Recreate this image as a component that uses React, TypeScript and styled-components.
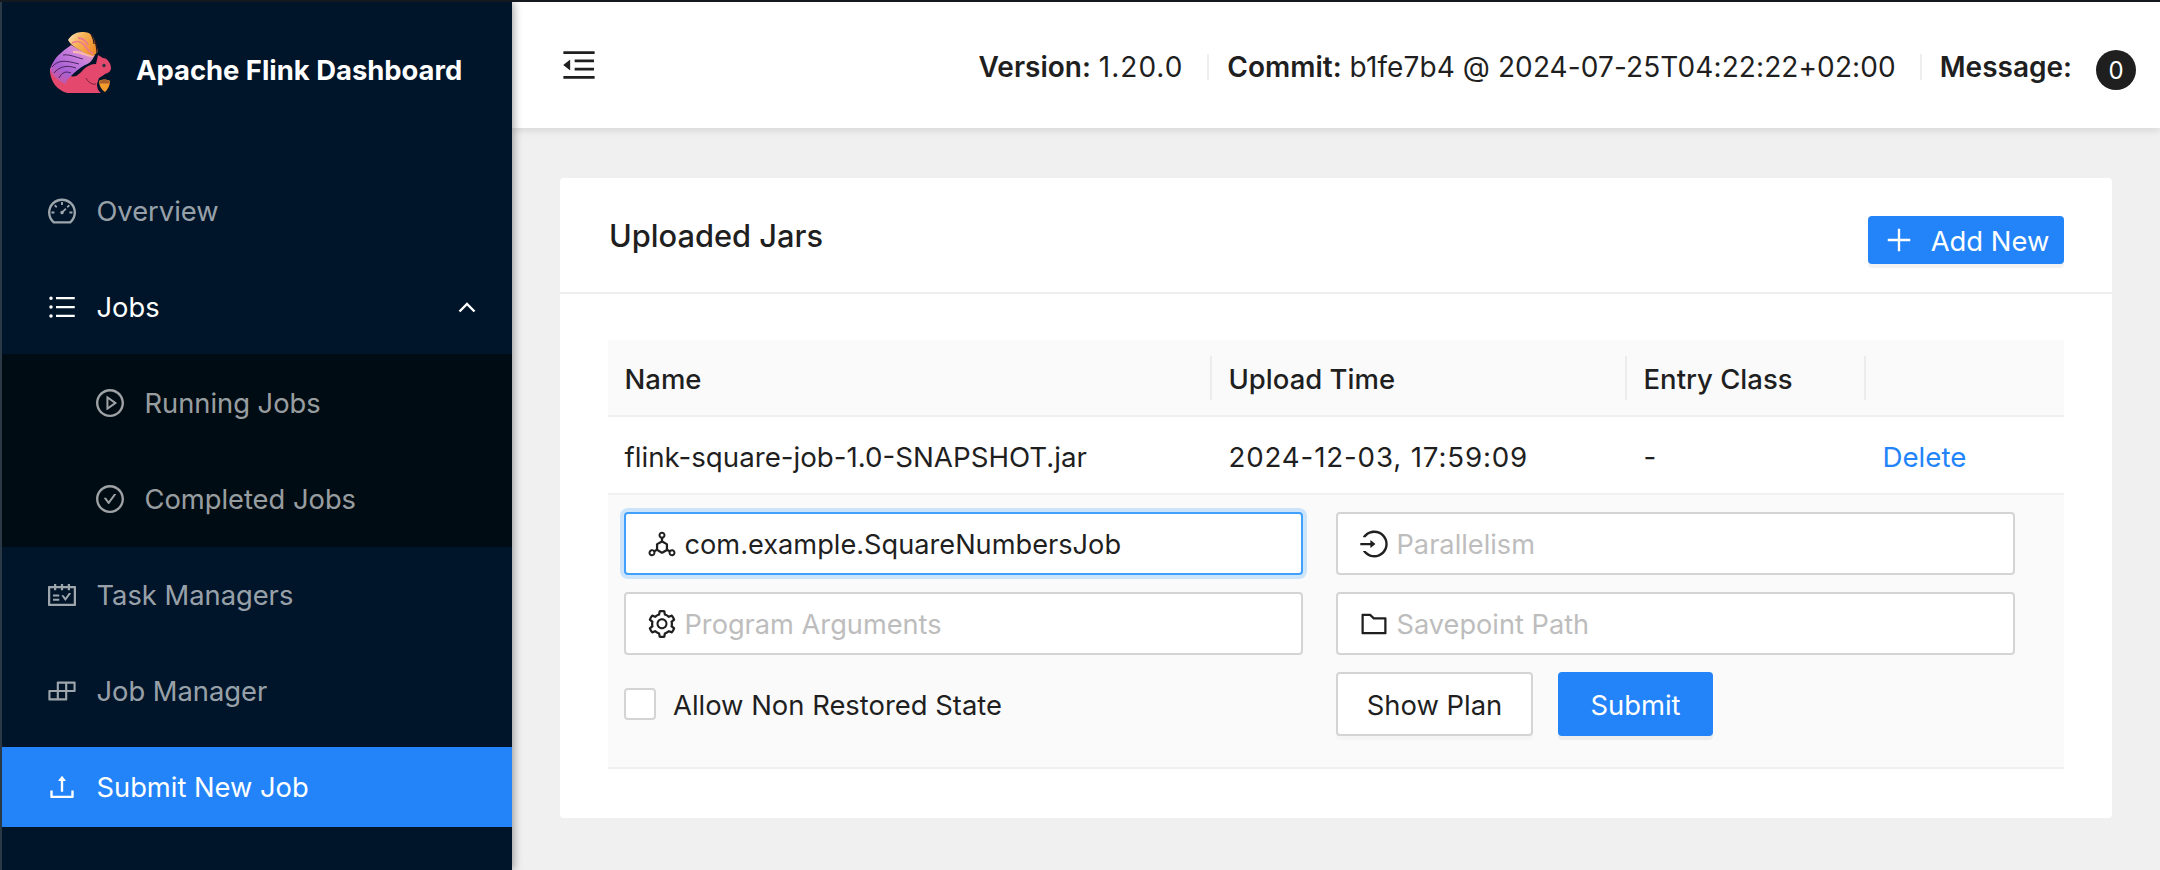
import styled, { createGlobalStyle } from "styled-components";
import {
  AiOutlineBars,
  AiOutlineBuild,
  AiOutlineCheckCircle,
  AiOutlineDashboard,
  AiOutlineDeploymentUnit,
  AiOutlineFolder,
  AiOutlineLogin,
  AiOutlineMenuFold,
  AiOutlinePlayCircle,
  AiOutlinePlus,
  AiOutlineSchedule,
  AiOutlineSetting,
  AiOutlineUpload,
} from "react-icons/ai";

const GlobalStyle = createGlobalStyle`
  html, body {
    margin: 0;
    padding: 0;
    background: #f0f0f0;
  }
  * {
    box-sizing: border-box;
  }
  body {
    font-family: Inter, "Liberation Sans", sans-serif;
    font-size: 27.4px;
    color: #1f1f1f;
  }
`;

const Shell = styled.div`
  width: 2160px;
  height: 870px;
  display: flex;
  overflow: hidden;
  border-top: 2px solid #14181f;
`;

const Sidebar = styled.aside`
  width: 512px;
  flex-shrink: 0;
  background: #001529;
  border-left: 2px solid #2b3947;
  box-shadow: 2px 0 8px rgba(0, 0, 0, 0.35);
  position: relative;
  z-index: 2;
`;

const Brand = styled.div`
  height: 161px;
  display: flex;
  align-items: flex-start;
  padding: 30px 0 0 47px;
  gap: 25px;
`;

const BrandTitle = styled.h1`
  margin: 22px 0 0;
  font-size: 27.4px;
  line-height: 32px;
  font-weight: 700;
  color: #fff;
`;

const Menu = styled.nav`
  display: flex;
  flex-direction: column;
`;

const MenuItem = styled.a<{ $active?: boolean; $open?: boolean }>`
  height: 80px;
  margin: 8px 0 ${(p) => (p.$open ? "7px" : "8px")};
  padding-left: 44px;
  display: flex;
  align-items: center;
  gap: 18.5px;
  font-size: 27.3px;
  color: ${(p) =>
    p.$active || p.$open ? "#fff" : "rgba(255, 255, 255, 0.62)"};
  background: ${(p) => (p.$active ? "#2284f8" : "transparent")};

  & > svg {
    font-size: 32px;
    flex-shrink: 0;
  }
`;

const Chevron = styled.svg`
  margin-left: auto;
  margin-right: 36px;
`;

const SubMenu = styled.div`
  background: #000c14;
  padding-top: 1px;
  display: flex;
  flex-direction: column;
`;

const SubItem = styled(MenuItem)`
  padding-left: 92px;
`;

const Main = styled.div`
  flex: 1;
  min-width: 0;
  display: flex;
  flex-direction: column;
`;

const Header = styled.header`
  height: 126px;
  flex-shrink: 0;
  background: #fff;
  box-shadow: 0 2px 8px rgba(0, 0, 0, 0.12);
  display: flex;
  align-items: center;
  padding: 4px 24px 0 47px;
`;

const FoldButton = styled.span`
  display: flex;
  font-size: 40px;
  margin-top: -4px;
  color: #1f1f1f;
`;

const HeaderInfo = styled.div`
  margin-left: auto;
  display: flex;
  align-items: center;
  font-size: 28px;
  white-space: nowrap;
`;

const InfoLabel = styled.strong`
  font-weight: 600;
  margin-right: 8px;
`;

const InfoValue = styled.span<{ $spacing: string }>`
  letter-spacing: ${(p) => p.$spacing};
`;

const InfoDivider = styled.span`
  width: 2px;
  height: 26px;
  background: #eeeeee;
  margin: 0 18px 0 24px;
`;

const Badge = styled.span`
  width: 40px;
  height: 40px;
  margin: 6px 0 0 16px;
  border-radius: 50%;
  background: #1f1f1f;
  color: #fff;
  font-size: 24px;
  display: flex;
  align-items: center;
  justify-content: center;
`;

const Content = styled.main`
  padding: 50px 48px 0;
`;

const Card = styled.section`
  height: 640px;
  background: #fff;
  border-radius: 4px;
`;

const CardHead = styled.div`
  height: 116px;
  border-bottom: 2px solid #eeeeee;
  display: flex;
  align-items: center;
  justify-content: space-between;
  padding: 0 48px;
`;

const CardTitle = styled.h2`
  margin: 0 0 0 1px;
  font-size: 30.8px;
  font-weight: 500;
`;

const PrimaryButton = styled.button`
  border: none;
  border-radius: 4px;
  background: #2284f8;
  color: #fff;
  font: inherit;
  font-size: 27.4px;
  display: flex;
  align-items: center;
  justify-content: center;
  padding-top: 3px;
  box-shadow: 0 4px 0 rgba(0, 0, 0, 0.05);
`;

const AddButton = styled(PrimaryButton)`
  width: 196px;
  height: 48px;
  gap: 16px;
  margin-top: 10px;

  & > svg {
    font-size: 32px;
    margin-top: -3px;
  }
`;

const CardBody = styled.div`
  padding: 46px 48px 0;
`;

const Row = styled.div<{ $head?: boolean }>`
  display: grid;
  grid-template-columns: 604px 415px 239px 198px;
  height: ${(p) => (p.$head ? "77px" : "78px")};
  align-items: center;
  background: ${(p) => (p.$head ? "#fafafa" : "#fff")};
  border-bottom: 2px solid #f0f0f0;
  font-weight: ${(p) => (p.$head ? 500 : 400)};
  font-size: ${(p) => (p.$head ? "27.5px" : "27.7px")};
`;

const Cell = styled.div<{ $divider?: boolean; $date?: boolean }>`
  padding: 3px 0 0 16.5px;
  position: relative;
  letter-spacing: ${(p) => (p.$date ? "0.85px" : "normal")};

  &::after {
    content: "";
    display: ${(p) => (p.$divider ? "block" : "none")};
    position: absolute;
    right: 0;
    top: 50%;
    width: 2px;
    height: 44px;
    margin-top: -22px;
    background: #ececec;
  }
`;

const DeleteLink = styled.a`
  color: #2284f8;
`;

const Expanded = styled.div`
  height: 274px;
  padding: 17px 0 0 16px;
  background: #fafafa;
  border-bottom: 2px solid #f0f0f0;
`;

const FormGrid = styled.div`
  display: grid;
  grid-template-columns: 679px 679px;
  grid-auto-rows: 63px;
  column-gap: 33px;
  row-gap: 17px;
`;

const Field = styled.div<{ $focused?: boolean }>`
  display: flex;
  align-items: center;
  gap: 6.5px;
  padding-left: 20px;
  background: #fff;
  border-radius: 4px;
  border: 2px solid ${(p) => (p.$focused ? "#40a0fb" : "#d4d4d4")};
  box-shadow: ${(p) =>
    p.$focused ? "0 0 0 4px rgba(24, 144, 255, 0.2)" : "none"};

  & > svg {
    font-size: 32px;
    flex-shrink: 0;
    color: #1f1f1f;
  }
`;

const FieldText = styled.span<{ $placeholder?: boolean }>`
  padding-top: 2px;
  font-size: 27.2px;
  color: ${(p) => (p.$placeholder ? "#bdbdbd" : "#1f1f1f")};
`;

const CheckRow = styled.label`
  display: flex;
  align-items: center;
  gap: 17px;
`;

const CheckBox = styled.span`
  width: 32px;
  height: 32px;
  background: #fff;
  border: 2px solid #d4d4d4;
  border-radius: 4px;
`;

const CheckLabel = styled.span`
  padding-top: 3px;
`;

const Actions = styled.div`
  display: flex;
  gap: 25px;
`;

const DefaultButton = styled.button`
  width: 197px;
  height: 64px;
  padding-top: 3px;
  background: #fff;
  border: 2px solid #d4d4d4;
  border-radius: 4px;
  font: inherit;
  color: #1f1f1f;
  box-shadow: 0 4px 0 rgba(0, 0, 0, 0.02);
`;

const SubmitButton = styled(PrimaryButton)`
  width: 155px;
  height: 64px;
`;

const Logo = () => (
  <svg width="62" height="62" viewBox="0 0 62 62">
    <defs>
      <linearGradient id="tailTop" x1="0" y1="0" x2="1" y2="0.5">
        <stop offset="0" stopColor="#fbe6c4" />
        <stop offset="0.45" stopColor="#f8b458" />
        <stop offset="1" stopColor="#ef8f2c" />
      </linearGradient>
      <linearGradient id="tailMid" x1="0" y1="1" x2="0.9" y2="0">
        <stop offset="0" stopColor="#d8538a" />
        <stop offset="0.35" stopColor="#a860d4" />
        <stop offset="0.7" stopColor="#cc82de" />
        <stop offset="1" stopColor="#f09aa0" />
      </linearGradient>
    </defs>
    {/* body and head */}
    <path
      d="M1 40C2 50 8 58 18 61L52 61C49 59 48 56 48 52L50 46C53 44 55 43 56 42C60 41 62 39 62 36C62 31 58 26 54 26L49 23L47 32C42 32 38 34 35 37C30 42 27 46 22 44L1 36Z"
      fill="#e4486c"
    />
    {/* purple tail */}
    <path
      d="M1 38C3 30 8 24 12 21C16 17 20 15 22 13L31 18L46 23C43 29 40 32 36 33C30 36 26 40 22 44C19 46 17 49 17 52C10 50 4 44 1 38Z"
      fill="url(#tailMid)"
    />
    <path
      d="M3 35C9 28 15 28 30 32M5 41C11 34 18 33 27 36M10 46C13 40 17 39 22 41M14 23C20 22 26 25 34 27"
      stroke="#3a1c50"
      strokeWidth="0.9"
      fill="none"
    />
    <path
      d="M24 20C30 19 36 23 44 24"
      stroke="#f7b7b0"
      strokeWidth="2.4"
      fill="none"
    />
    {/* orange plume */}
    <path
      d="M19 8C22 3 27 0 33 0C38 0 42 1 44 5C46 9 48 14 49 20L44 24C38 22 33 20 29 17C25 15 21 12 19 8Z"
      fill="url(#tailTop)"
    />
    <path
      d="M23 11C28 8 33 10 36 14C38 17 41 20 44 22M29 6C33 6 37 9 39 13"
      stroke="#ee7b8e"
      strokeWidth="1.8"
      fill="none"
    />
    <path
      d="M42 2C44 6 45 9 45 12M46 8C47 12 48 16 48 21"
      stroke="#2a1820"
      strokeWidth="1.3"
      fill="none"
    />
    {/* face and arm */}
    <circle cx="55" cy="33.5" r="1.7" fill="#2a3540" />
    <path
      d="M37 46C39 50 43 53 47 52"
      stroke="#7d1e3a"
      strokeWidth="1"
      fill="none"
    />
    {/* acorn */}
    <path
      d="M50 49C53 47 58 47 61 49C61 54 58 58 56 60C53 58 50 54 50 49Z"
      fill="#f59a2c"
    />
    <path d="M50 50C53 46.5 58 46.5 61 50L60 51.5L51 51.5Z" fill="#a9602c" />
  </svg>
);

const App = () => {
  return (
    <>
      <GlobalStyle />
      <Shell>
        <Sidebar>
          <Brand>
            <Logo />
            <BrandTitle>Apache Flink Dashboard</BrandTitle>
          </Brand>
          <Menu>
            <MenuItem>
              <AiOutlineDashboard />
              Overview
            </MenuItem>
            <MenuItem $open>
              <AiOutlineBars />
              Jobs
              <Chevron width="18" height="11" viewBox="0 0 18 11">
                <path
                  d="M1.5 9.5L9 2L16.5 9.5"
                  stroke="#fff"
                  strokeWidth="2.4"
                  fill="none"
                />
              </Chevron>
            </MenuItem>
            <SubMenu>
              <SubItem>
                <AiOutlinePlayCircle />
                Running Jobs
              </SubItem>
              <SubItem>
                <AiOutlineCheckCircle />
                Completed Jobs
              </SubItem>
            </SubMenu>
            <MenuItem>
              <AiOutlineSchedule />
              Task Managers
            </MenuItem>
            <MenuItem>
              <AiOutlineBuild />
              Job Manager
            </MenuItem>
            <MenuItem $active>
              <AiOutlineUpload />
              Submit New Job
            </MenuItem>
          </Menu>
        </Sidebar>
        <Main>
          <Header>
            <FoldButton>
              <AiOutlineMenuFold />
            </FoldButton>
            <HeaderInfo>
              <InfoLabel>Version:</InfoLabel>
              <InfoValue $spacing="1px">1.20.0</InfoValue>
              <InfoDivider />
              <InfoLabel>Commit:</InfoLabel>
              <InfoValue $spacing="0.1px">
                b1fe7b4 @ 2024-07-25T04:22:22+02:00
              </InfoValue>
              <InfoDivider />
              <InfoLabel>Message:</InfoLabel>
              <Badge>0</Badge>
            </HeaderInfo>
          </Header>
          <Content>
            <Card>
              <CardHead>
                <CardTitle>Uploaded Jars</CardTitle>
                <AddButton>
                  <AiOutlinePlus />
                  Add New
                </AddButton>
              </CardHead>
              <CardBody>
                <Row $head>
                  <Cell $divider>Name</Cell>
                  <Cell $divider>Upload Time</Cell>
                  <Cell $divider>Entry Class</Cell>
                  <Cell />
                </Row>
                <Row>
                  <Cell>flink-square-job-1.0-SNAPSHOT.jar</Cell>
                  <Cell $date>2024-12-03, 17:59:09</Cell>
                  <Cell>-</Cell>
                  <Cell>
                    <DeleteLink>Delete</DeleteLink>
                  </Cell>
                </Row>
                <Expanded>
                  <FormGrid>
                    <Field $focused>
                      <AiOutlineDeploymentUnit />
                      <FieldText>com.example.SquareNumbersJob</FieldText>
                    </Field>
                    <Field>
                      <AiOutlineLogin />
                      <FieldText $placeholder>Parallelism</FieldText>
                    </Field>
                    <Field>
                      <AiOutlineSetting />
                      <FieldText $placeholder>Program Arguments</FieldText>
                    </Field>
                    <Field>
                      <AiOutlineFolder />
                      <FieldText $placeholder>Savepoint Path</FieldText>
                    </Field>
                    <CheckRow>
                      <CheckBox />
                      <CheckLabel>Allow Non Restored State</CheckLabel>
                    </CheckRow>
                    <Actions>
                      <DefaultButton>Show Plan</DefaultButton>
                      <SubmitButton>Submit</SubmitButton>
                    </Actions>
                  </FormGrid>
                </Expanded>
              </CardBody>
            </Card>
          </Content>
        </Main>
      </Shell>
    </>
  );
};

export default App;
